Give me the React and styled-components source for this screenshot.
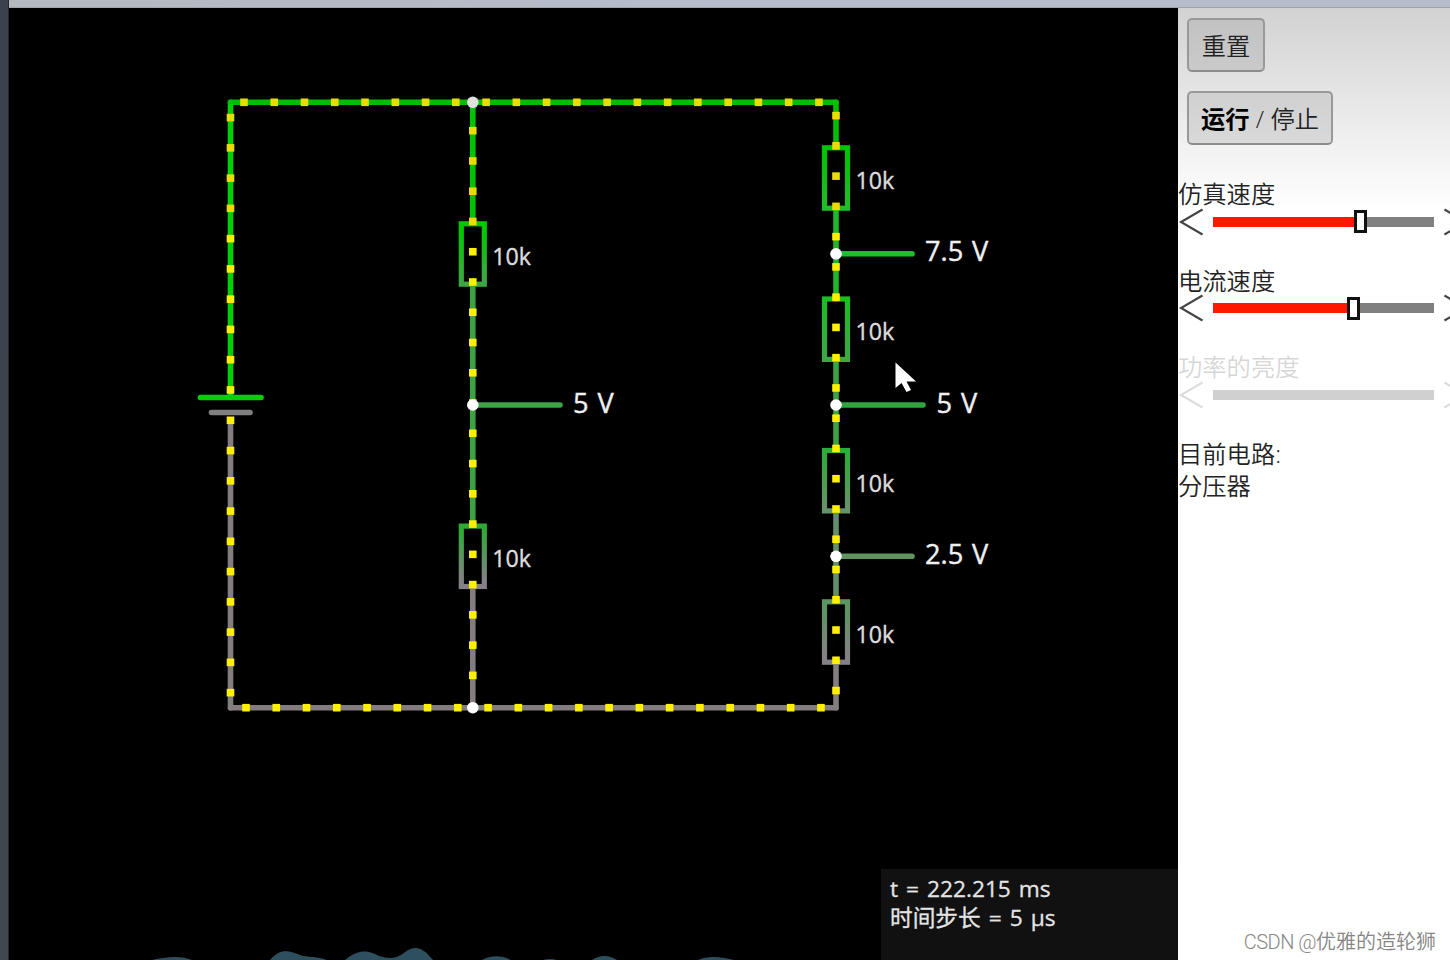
import styled, { createGlobalStyle } from "styled-components";

const GlobalStyle = createGlobalStyle`
  * {
    box-sizing: border-box;
  }
  body {
    margin: 0;
    overflow: hidden;
    background-color: #fff;
    font-family: "Open Sans", "Noto Sans CJK SC", sans-serif;
  }
`;

const Container = styled.div`
  display: flex;
  width: 1450px;
  height: 960px;
  overflow: hidden;
`;

const LeftEdge = styled.div`
  flex: none;
  width: 8px;
  background: linear-gradient(#3b414d, #40474e);
  box-shadow: 1px 0 0 #25282c;
  z-index: 1;
`;

const Window = styled.div`
  flex: 1;
  min-width: 0;
  display: flex;
  flex-direction: column;
`;

const TitleStrip = styled.div`
  flex: none;
  height: 8px;
  background: linear-gradient(90deg, #b5b9c0, #b5bccb 50%, #b6bdca);
  border-bottom: 1px solid #a0a3aa;
`;

const Main = styled.div`
  flex: 1;
  display: flex;
  min-height: 0;
`;

const Board = styled.div`
  position: relative;
  flex: none;
  width: 1170px;
  background-color: #000;
`;

const Drawing = styled.svg`
  display: block;
`;

const Label = styled.text`
  fill: ${(props) => (props.$big ? "#f0f0f0" : "#dcdcdc")};
  stroke: ${(props) => (props.$big ? "#f0f0f0" : "#dcdcdc")};
  stroke-width: 0.4px;
  font-size: ${(props) => (props.$big ? "27.2px" : "23.2px")};
  word-spacing: ${(props) => (props.$big ? "1.8px" : "0")};
`;

const Status = styled.div`
  position: absolute;
  right: 0;
  bottom: 0;
  width: 297px;
  height: 91px;
  padding: 5px 9px;
  background-color: #111;
  color: #e4e4e4;
  font-size: 22.7px;
  line-height: 29px;
  word-spacing: 2.1px;
  -webkit-text-stroke: 0.3px #e4e4e4;
  white-space: nowrap;
`;

const Sidebar = styled.div`
  flex: 1;
  min-width: 0;
  display: flex;
  flex-direction: column;
  align-items: flex-start;
  overflow: hidden;
  background: linear-gradient(#d2d2d2, #fff 200px);
  color: #222;
  font-size: 24.3px;
  line-height: 32px;
`;

const Button = styled.button`
  height: 54px;
  width: ${(props) => props.$width};
  margin: ${(props) => props.$margin};
  padding: 2px 0 0;
  border: 2px solid #999;
  border-bottom-color: #8c8c8c;
  border-radius: 5px;
  background: ${(props) => props.$fill};
  color: #222;
  font-family: inherit;
  font-size: 24.3px;
  font-weight: 350;
  line-height: 48px;
  white-space: nowrap;

  b {
    font-weight: 700;
    color: #000;
  }
`;

const Field = styled.div`
  flex: none;
  height: 86.7px;
  opacity: ${(props) => (props.$disabled ? 0.18 : 1)};
`;

const FieldName = styled.div`
  height: 29px;
  line-height: 32px;
  font-weight: 350;
  white-space: nowrap;
`;

const SliderRow = styled.div`
  display: flex;
  align-items: center;
  height: 29px;
  width: 292px;
`;

const Track = styled.div`
  flex: none;
  display: flex;
  align-items: center;
  width: 221px;
  height: 10px;
  margin: 0 10px;
  background-color: ${(props) => (props.$disabled ? "#000" : "#808080")};
`;

const Filled = styled.div`
  height: 10px;
  background-color: #ff1800;
`;

const Thumb = styled.div`
  flex: none;
  width: 13px;
  height: 23px;
  border: 3px solid #111;
  background-color: #fff;
`;

const Current = styled.div`
  font-weight: 350;
`;

const Watermark = styled.div`
  margin: auto 14px 1px auto;
  color: #858585;
  font-family: Roboto, "Noto Sans CJK SC", sans-serif;
  font-size: 20px;
  font-weight: 350;
  line-height: 34px;
  white-space: nowrap;

  span {
    letter-spacing: -0.5px;
  }
`;

const STEP = 30.26;

const dotRows = [
  { x: 230.5, y: 117.6, n: 10 },
  { x: 230.5, y: 420.3, n: 10 },
  { x: 472.8, y: 130.7, n: 19 },
  { x: 836, y: 115.6, n: 20 },
  { x: 244, y: 102.3, n: 20, across: true },
  { x: 246, y: 707.7, n: 20, across: true },
];

const wires = [
  { d: "M230.5 397V102.3", color: "#00cf00" },
  { d: "M230.5 102.3H836", color: "#00bd00" },
  { d: "M472.8 102.3V223", color: "#00c300" },
  { d: "M472.8 285V525", color: "#3ca244" },
  { d: "M472.8 587V707.7", color: "#837d80" },
  { d: "M836 102.3V147", color: "#00c000" },
  { d: "M836 209V299", color: "#20b826" },
  { d: "M836 360V450", color: "#3da245" },
  { d: "M836 511V601", color: "#629066" },
  { d: "M836 662V707.7", color: "#837d80" },
  { d: "M230.5 420V707.7", color: "#837d80" },
  { d: "M230.5 707.7H836", color: "#837d80" },
  { d: "M200.5 397.5H261", color: "#00cf00" },
  { d: "M211.5 412.5H250", color: "#808080" },
  { d: "M472.8 405H560", color: "#3ca444" },
  { d: "M836 253.8H912", color: "#1fc027" },
  { d: "M836 405H923", color: "#30a53c" },
  { d: "M836 556.3H912", color: "#60945f" },
];

const resistors = [
  { x: 472.8, y: 254, from: "#00c800", to: "#3da743" },
  { x: 472.8, y: 556.3, from: "#30a938", to: "#858085" },
  { x: 836, y: 178, from: "#00c400", to: "#20bb27" },
  { x: 836, y: 329.2, from: "#1cbd24", to: "#3da845" },
  { x: 836, y: 480.7, from: "#30aa38", to: "#659367" },
  { x: 836, y: 632, from: "#5b9560", to: "#858085" },
];

const nodes = [
  { x: 472.8, y: 102.3, fill: "#e0e0e0" },
  { x: 472.8, y: 405 },
  { x: 472.8, y: 707.7 },
  { x: 836, y: 253.8 },
  { x: 836, y: 405 },
  { x: 836, y: 556.3 },
];

const voltages = [
  { x: 573, y: 412.5, text: "5 V" },
  { x: 925, y: 261, text: "7.5 V" },
  { x: 936.5, y: 412.5, text: "5 V" },
  { x: 925, y: 564, text: "2.5 V" },
];

const Resistor = ({ id, x, y, from, to }) => (
  <g>
    <linearGradient id={id} x1="0" y1="0" x2="0" y2="1">
      <stop offset="0.1" stopColor={from} />
      <stop offset="0.9" stopColor={to} />
    </linearGradient>
    <rect
      x={x - 11.5}
      y={y - 30.2}
      width="23"
      height="60.4"
      fill="none"
      stroke={`url(#${id})`}
      strokeWidth="5.2"
    />
    <Label x={x + 19.5} y={y + 10.9}>
      10k
    </Label>
  </g>
);

const Dots = ({ x, y, n, across }) =>
  Array.from({ length: n }, (_, i) => {
    const cx = across ? x + i * STEP : x;
    const cy = across ? y : y + i * STEP;
    return (
      <rect
        key={i}
        x={cx - 3.8}
        y={cy - 3.8}
        width="7.6"
        height="7.6"
        fill={cy < 230 ? "#eadc00" : "#fff000"}
      />
    );
  });

const Circuit = () => (
  <Drawing width="1170" height="952" viewBox="8 8 1170 952">
    {wires.map((wire) => (
      <path
        key={wire.d}
        d={wire.d}
        stroke={wire.color}
        strokeWidth="5.6"
        strokeLinecap="round"
      />
    ))}
    {resistors.map((r, i) => (
      <Resistor key={i} id={`resistor-${i}`} {...r} />
    ))}
    {dotRows.map((row, i) => (
      <Dots key={i} {...row} />
    ))}
    {nodes.map((node, i) => (
      <circle key={i} cx={node.x} cy={node.y} r="5.8" fill={node.fill || "#fff"} />
    ))}
    {voltages.map((v) => (
      <Label key={v.x + v.y} x={v.x} y={v.y} $big>
        {v.text}
      </Label>
    ))}
    {/* mouse pointer */}
    <path d="M895.5 362.5V388L901.5 383L906.5 392L911 390L906.5 381.5H916Z" fill="#fff" />
    {/* wave along the bottom edge */}
    <path
      fill="#2e4f5e"
      d="M152 960C165 957 181 955 192 960ZM270 960C281 948 287 950 303 956C312 957 319 957 327 960ZM345 960C359 949 368 950 379 956C389 959 396 959 404 953C414 945 422 946 433 960ZM482 960C491 955 501 955 511 960ZM543 960Q550 958 557 960ZM592 960Q604 952 617 960ZM698 960C706 956 719 956 734 960Z"
    />
  </Drawing>
);

const Arrow = ({ flip }) => (
  <svg width="25" height="28" viewBox="0 0 25 28" style={{ flex: "none" }}>
    <path
      d={flip ? "M0.5 1.5L22 14L0.5 26.5" : "M24.5 1.5L3 14L24.5 26.5"}
      fill="none"
      stroke="#444"
      strokeWidth="2.1"
    />
  </svg>
);

const Slider = ({ name, value, disabled }) => (
  <Field $disabled={disabled}>
    <FieldName>{name}</FieldName>
    <SliderRow>
      <Arrow />
      <Track $disabled={disabled}>
        {!disabled && (
          <>
            <Filled style={{ width: value }} />
            <Thumb />
          </>
        )}
      </Track>
      <Arrow flip />
    </SliderRow>
  </Field>
);

const App = () => {
  return (
    <Container>
      <GlobalStyle />
      <LeftEdge />
      <Window>
        <TitleStrip />
        <Main>
          <Board>
            <Circuit />
            <Status>
              <div>t = 222.215 ms</div>
              <div>时间步长 = 5 μs</div>
            </Status>
          </Board>
          <Sidebar>
            <Button
              $width="78px"
              $margin="10px 0 0 9px"
              $fill="linear-gradient(#c2c2c2, #cacaca)"
            >
              重置
            </Button>
            <Button
              $width="146px"
              $margin="19px 0 33px 9px"
              $fill="linear-gradient(#d0d0d0, #d9d9d9)"
            >
              <b>运行</b> / 停止
            </Button>
            <Slider name="仿真速度" value={141} />
            <Slider name="电流速度" value={134} />
            <Slider name="功率的亮度" disabled />
            <Current>
              目前电路:
              <br />
              分压器
            </Current>
            <Watermark>
              <span>CSDN @</span>优雅的造轮狮
            </Watermark>
          </Sidebar>
        </Main>
      </Window>
    </Container>
  );
};

export default App;
